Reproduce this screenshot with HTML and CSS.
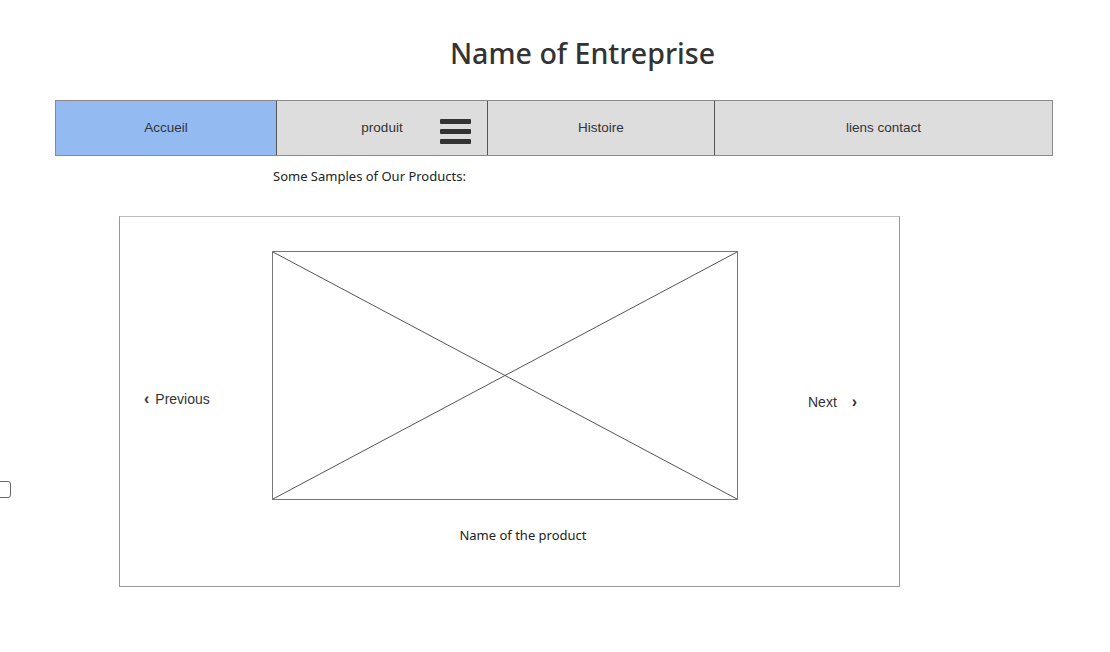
FILE: index.html
```html
<!DOCTYPE html>
<html>
<head>
<meta charset="utf-8">
<link rel="stylesheet" href="styles.css">
</head>
<body>
<h1 class="title">Name of Entreprise</h1>
<nav class="nav">
  <div class="cell active">Accueil</div>
  <div class="cell produit">produit
    <span class="burger"><i></i><i></i><i></i></span>
  </div>
  <div class="cell">Histoire</div>
  <div class="cell">liens contact</div>
</nav>
<p class="caption">Some Samples of Our Products:</p>
<section class="carousel">
  <div class="row">
    <div class="prev"><span class="chev">&#8249;</span>Previous</div>
    <div class="image">
      <svg width="100%" height="100%" viewBox="0 0 100 100" preserveAspectRatio="none">
        <line x1="0" y1="0" x2="100" y2="100" stroke="#555" stroke-width="1" vector-effect="non-scaling-stroke"/>
        <line x1="100" y1="0" x2="0" y2="100" stroke="#555" stroke-width="1" vector-effect="non-scaling-stroke"/>
      </svg>
    </div>
    <div class="next">Next<span class="chev">&#8250;</span></div>
  </div>
  <p class="pname">Name of the product</p>
</section>
<div class="checkbox"></div>
</body>
</html>
```
FILE: styles.css
```css
* { box-sizing: border-box; }
body {
  margin: 0;
  font-family: "Liberation Sans", Arial, sans-serif;
  color: #333;
  background: #fff;
  position: relative;
  width: 1110px;
  height: 652px;
  overflow: hidden;
}
.title {
  margin: 0;
  padding-top: 36px;
  padding-left: 55px;
  text-align: center;
  font-family: "Noto Sans", sans-serif;
  font-weight: 500;
  font-size: 28.6px;
  line-height: 34px;
  color: #333;
  height: 100px;
}
.nav {
  margin-left: 55px;
  width: 998px;
  height: 56px;
  border: 1px solid #8a8a8a;
  display: grid;
  grid-template-columns: 220px 211px 227px 338px;
  background: #dddddd;
}
.cell {
  display: flex;
  align-items: center;
  justify-content: center;
  font-size: 13.5px;
  color: #333;
  border-left: 1px solid #555;
  position: relative;
  padding-bottom: 2px;
}
.cell:first-child { border-left: none; }
.cell.active { background: #94bbf1; }
.burger {
  position: absolute;
  left: 163px;
  top: 18px;
  width: 31px;
  display: flex;
  flex-direction: column;
  gap: 5px;
}
.burger i {
  display: block;
  height: 5px;
  border-radius: 1px;
  background: #333;
}
.caption {
  margin: 0;
  padding-left: 273px;
  padding-top: 12px;
  height: 60px;
  font-family: "Noto Sans", sans-serif;
  font-size: 13px;
  line-height: 16px;
  color: #222;
}
.carousel {
  margin-left: 119px;
  width: 781px;
  height: 371px;
  border: 1px solid #999;
  border-top-color: #bbb;
  padding-top: 34px;
}
.row {
  display: flex;
  align-items: flex-start;
}
.prev {
  width: 152px;
  padding-left: 24px;
  padding-top: 139px;
  font-size: 14px;
  line-height: 18px;
  display: flex;
  align-items: center;
}
.prev .chev { margin-right: 6px; font-weight: bold; font-size: 16px; line-height: 18px; }
.image {
  width: 466px;
  height: 249px;
  border: 1px solid #777;
}
.image svg { display: block; }
.next {
  padding-left: 70px;
  padding-top: 142px;
  font-size: 14px;
  line-height: 18px;
  display: flex;
  align-items: center;
}
.next .chev { margin-left: 15px; font-weight: bold; font-size: 16px; line-height: 18px; }
.pname {
  margin: 26px 0 0 0;
  padding-left: 27px;
  text-align: center;
  font-family: "Noto Sans", sans-serif;
  font-size: 13px;
  line-height: 18px;
  color: #222;
}
.checkbox {
  position: absolute;
  left: -6px;
  top: 481px;
  width: 17px;
  height: 17px;
  border: 1px solid #666;
  border-radius: 3px;
  background: #fff;
}
```
